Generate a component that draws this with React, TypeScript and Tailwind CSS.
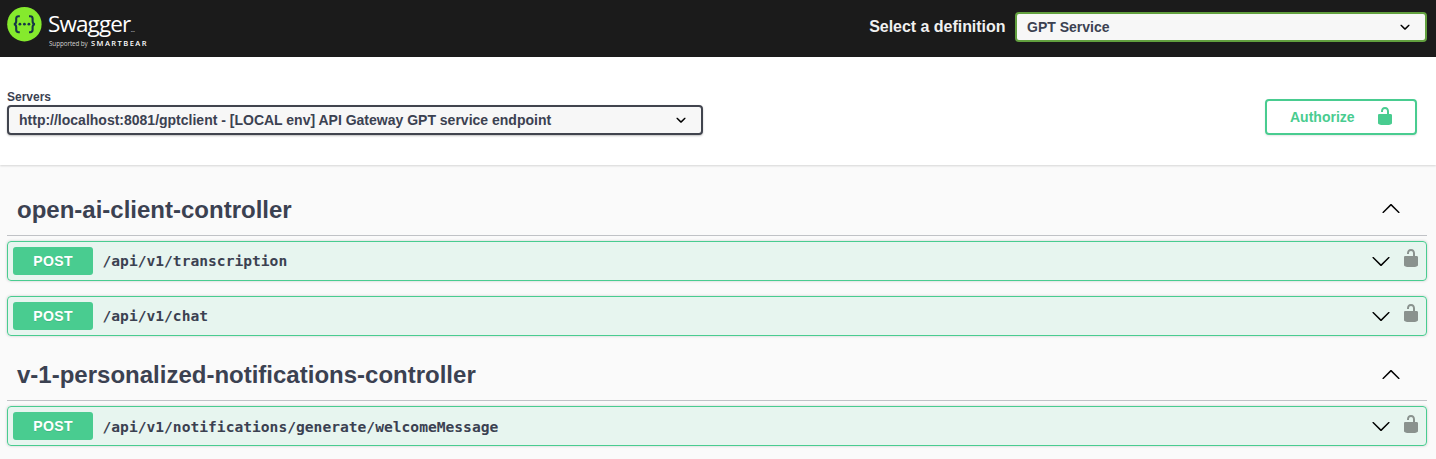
import React from "react";

const UNLOCK =
  "M15.8 8H14V5.6C14 2.703 12.665 1 10 1 7.334 1 6 2.703 6 5.6V6h2v-.801C8 3.754 8.797 3 10 3c1.203 0 2 .754 2 2.199V8H4c-.553 0-1 .646-1 1.199V17c0 .549.428 1.139.951 1.307l1.197.387C5.672 18.861 6.55 19 7.1 19h5.8c.549 0 1.428-.139 1.951-.307l1.196-.387c.524-.167.953-.757.953-1.306V9.199C17 8.646 16.352 8 15.8 8z";
const ARROW_UP =
  "M17.418 14.908c.272.268.709.268.979 0s.271-.701 0-.969l-7.908-7.83c-.27-.268-.707-.268-.979 0l-7.908 7.83c-.27.268-.27.701 0 .969.271.268.709.268.979 0L10 7.767l7.418 7.141z";
const ARROW_DOWN =
  "M17.418 6.109c.272-.268.709-.268.979 0s.271.701 0 .969l-7.908 7.83c-.27.268-.707.268-.979 0l-7.908-7.83c-.27-.268-.27-.701 0-.969.271-.268.709-.268.979 0L10 13.25l7.418-7.141z";
const SELECT_ARROW =
  "M13.418 7.859c.271-.268.709-.268.978 0 .27.268.272.701 0 .969l-3.908 3.83c-.27.268-.707.268-.979 0l-3.908-3.83c-.27-.267-.27-.701 0-.969.271-.268.709-.268.978 0L10 11l3.418-3.141z";

function Icon({ d, className = "" }: { d: string; className?: string }) {
  return (
    <svg viewBox="0 0 20 20" className={`size-5 shrink-0 ${className}`} fill="currentColor">
      <path d={d} />
    </svg>
  );
}

function Logo() {
  return (
    <div className="flex h-[57px] pl-[7px]">
      <svg viewBox="0 0 35 35" className="mt-[7px] size-[35px] shrink-0">
        <circle cx="17.4" cy="17.2" r="17.2" fill="#85ea2d" />
        <g fill="none" stroke="#173647" strokeWidth="2.1">
          <path d="M12.8 9.2h-1.2c-1.7 0-2.4.9-2.4 2.4v2.7c0 1.8-.8 2.7-2.3 2.9 1.5.2 2.3 1.1 2.3 2.9v2.7c0 1.5.7 2.4 2.4 2.4h1.2" />
          <path d="M22 9.2h1.2c1.7 0 2.4.9 2.4 2.4v2.7c0 1.8.8 2.7 2.3 2.9-1.5.2-2.3 1.1-2.3 2.9v2.7c0 1.5-.7 2.4-2.4 2.4H22" />
        </g>
        <g fill="#173647">
          <circle cx="12.9" cy="17.2" r="1.4" />
          <circle cx="17.4" cy="17.2" r="1.4" />
          <circle cx="21.9" cy="17.2" r="1.4" />
        </g>
      </svg>
      <div className="ml-[6px] flex flex-col pt-[10px] text-white">
        <div className="flex h-[28px] items-start font-['Open_Sans','Noto_Sans',sans-serif]">
          <span className="w-[83px] text-[22.5px] leading-[27px] tracking-[-0.9px]">Swagger</span>
          <span className="pt-[19px] text-[2.5px] leading-[4px]">TM</span>
        </div>
        <div className="flex h-[11px] items-center pl-[1px] whitespace-nowrap font-['Open_Sans','Noto_Sans',sans-serif] leading-[9px]">
          <span className="w-[42px] text-[6.3px] tracking-[-0.08px] text-[#d0d0d0]">Supported by</span>
          <span className="text-[7.5px] font-semibold tracking-[1.45px]">SMARTBEAR</span>
        </div>
      </div>
    </div>
  );
}

function Operation({ path, className = "pt-0" }: { path: string; className?: string }) {
  return (
    <div className="mb-[15px] flex h-10 items-center rounded border border-[#49cc90] bg-[#49cc90]/10 pl-[5px] shadow-[0_0_3px_rgba(0,0,0,0.19)]">
      <span className="flex h-7 w-20 items-center justify-center rounded-[3px] bg-[#49cc90] text-[14px] font-bold tracking-[0.4px] text-white [text-shadow:0_1px_0_rgba(0,0,0,0.1)]">
        POST
      </span>
      <span
        className={`flex-1 pl-[9.5px] font-['DejaVu_Sans_Mono',monospace] text-[14.62px] leading-5 font-bold ${className}`}
      >
        {path}
      </span>
      <Icon d={ARROW_DOWN} className="mr-[10px] text-black" />
      <div className={`mr-[5px] mb-[6px] ${className}`}>
        <Icon d={UNLOCK} className="text-black opacity-40" />
      </div>
    </div>
  );
}

function Tag({ name, paths, className }: { name: string; paths: string[]; className?: string }) {
  return (
    <section>
      <div className="mb-[5px] flex h-[50px] items-center justify-between border-b border-[#3b4151]/30 pr-[26px] pb-[1px] pl-[10px]">
        <h3 className="text-[24px] leading-[30px] font-bold">{name}</h3>
        <div className={`mb-[4px] ${className ?? ""}`}>
          <Icon d={ARROW_UP} className="text-black" />
        </div>
      </div>
      {paths.map((path) => (
        <Operation key={path} path={path} className={className} />
      ))}
    </section>
  );
}

export default function App() {
  return (
    <div className="h-[459px] overflow-hidden bg-[#fafafa] font-['Liberation_Sans',Arial,sans-serif] text-[#3b4151]">
      <header className="flex h-[57px] items-start justify-between bg-[#1b1b1b] pr-[9px]">
        <Logo />
        <div className="flex items-center pt-3">
          <span className="mr-[9.5px] text-[16px] font-bold tracking-[-0.03px] text-[#f0f0f0]">Select a definition</span>
          <div className="flex h-[30px] w-[412px] items-center justify-between rounded border-2 border-[#62a03f] bg-[#f7f7f7] pr-[10px] pl-[10px] text-[14px] font-bold">
            <span>GPT Service</span>
            <Icon d={SELECT_ARROW} className="text-black" />
          </div>
        </div>
      </header>
      <div className="flex h-[108px] justify-between bg-white pr-[19px] pl-[7px] shadow-[0_1px_2px_rgba(0,0,0,0.15)]">
        <div className="pt-[32px]">
          <div className="h-4 text-[12px] leading-4 font-bold">Servers</div>
          <div className="flex h-[30px] w-[696px] items-center justify-between rounded border-2 border-[#41444e] bg-[#f7f7f7] pr-[10px] pl-[10px] text-[14px] font-bold shadow-[0_1px_2px_rgba(0,0,0,0.25)]">
            <span>http://localhost:8081/gptclient - [LOCAL env] API Gateway GPT service endpoint</span>
            <Icon d={SELECT_ARROW} className="text-black" />
          </div>
        </div>
        <button className="mt-[42px] flex h-9 w-[152px] items-center justify-between rounded border-2 border-[#49cc90] pr-[20px] pl-[23px] text-[14px] font-bold text-[#49cc90] shadow-[0_1px_2px_rgba(0,0,0,0.1)]">
          <span>Authorize</span>
          <Icon d={UNLOCK} className="mb-[2px]" />
        </button>
      </div>
      <main className="pr-[9px] pl-[7px] pt-[21px]">
        <Tag name="open-ai-client-controller" paths={["/api/v1/transcription", "/api/v1/chat"]} />
        <Tag
          name="v-1-personalized-notifications-controller"
          paths={["/api/v1/notifications/generate/welcomeMessage"]}
          className="pt-[2px]"
        />
      </main>
    </div>
  );
}
